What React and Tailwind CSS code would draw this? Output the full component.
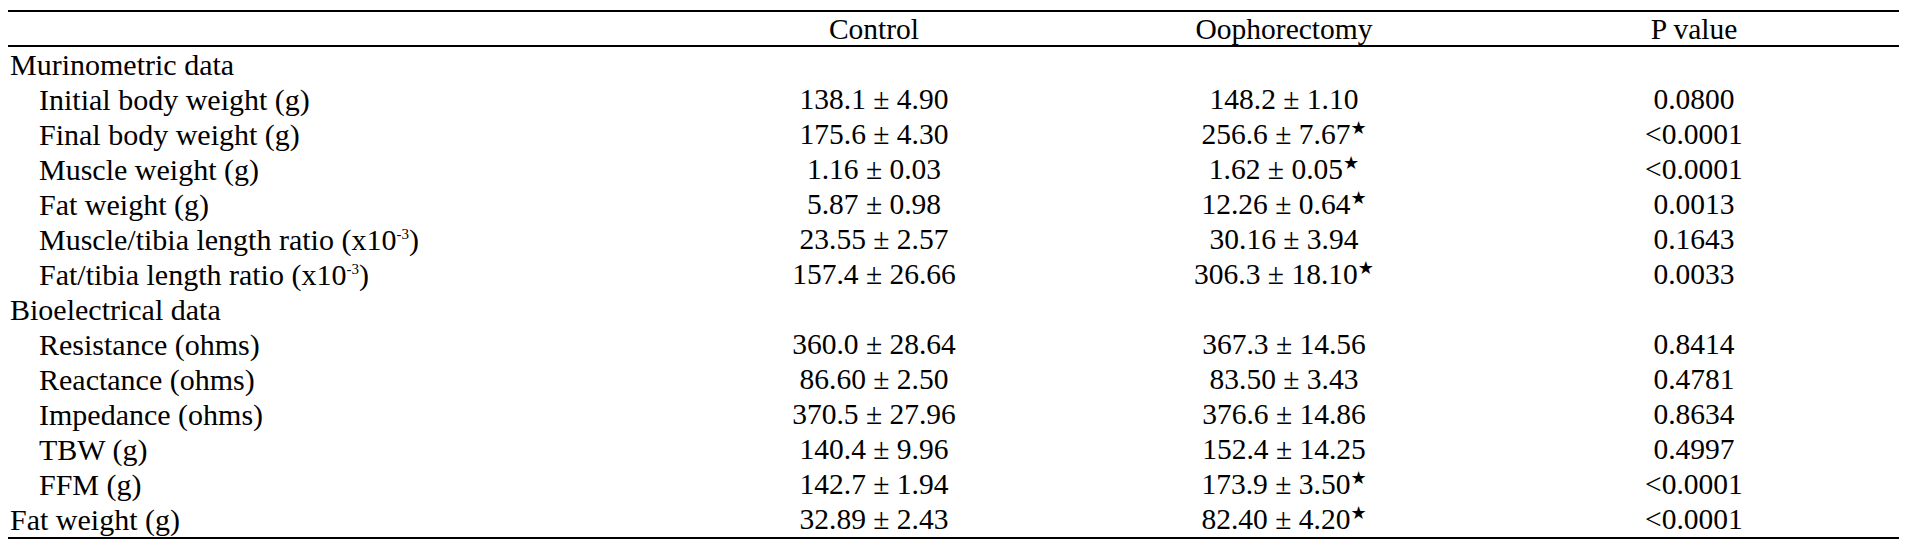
const rows = [
  { label: 'Murinometric data', group: true },
  { label: 'Initial body weight (g)', control: '138.1 ± 4.90', ovx: '148.2 ± 1.10', p: '0.0800' },
  { label: 'Final body weight (g)', control: '175.6 ± 4.30', ovx: '256.6 ± 7.67', star: true, p: '<0.0001' },
  { label: 'Muscle weight (g)', control: '1.16 ± 0.03', ovx: '1.62 ± 0.05', star: true, p: '<0.0001' },
  { label: 'Fat weight (g)', control: '5.87 ± 0.98', ovx: '12.26 ± 0.64', star: true, p: '0.0013' },
  { label: 'Muscle/tibia length ratio (x10', sup: '-3', control: '23.55 ± 2.57', ovx: '30.16 ± 3.94', p: '0.1643' },
  { label: 'Fat/tibia length ratio (x10', sup: '-3', control: '157.4 ± 26.66', ovx: '306.3 ± 18.10', star: true, p: '0.0033' },
  { label: 'Bioelectrical data', group: true },
  { label: 'Resistance (ohms)', control: '360.0 ± 28.64', ovx: '367.3 ± 14.56', p: '0.8414' },
  { label: 'Reactance (ohms)', control: '86.60 ± 2.50', ovx: '83.50 ± 3.43', p: '0.4781' },
  { label: 'Impedance (ohms)', control: '370.5 ± 27.96', ovx: '376.6 ± 14.86', p: '0.8634' },
  { label: 'TBW (g)', control: '140.4 ± 9.96', ovx: '152.4 ± 14.25', p: '0.4997' },
  { label: 'FFM (g)', control: '142.7 ± 1.94', ovx: '173.9 ± 3.50', star: true, p: '<0.0001' },
  { label: 'Fat weight (g)', top: true, control: '32.89 ± 2.43', ovx: '82.40 ± 4.20', star: true, p: '<0.0001' },
];

function Star() {
  return (
    <span className="relative top-[-10px] text-[18px] leading-none font-['DejaVu_Sans',sans-serif]">★</span>
  );
}

export default function App() {
  return (
    <div className="min-h-screen bg-white pt-[10px] pl-[8px] text-black font-['Liberation_Serif',serif] text-[29.5px] leading-[35px]">
      <div className="w-[1891px] border-t-2 border-b-2 border-black">
        {/* Header */}
        <div className="grid grid-cols-[661px_1fr_1fr_1fr] h-[35px] border-b-2 border-black">
          <div />
          <div className="text-center">Control</div>
          <div className="text-center">Oophorectomy</div>
          <div className="text-center">P value</div>
        </div>

        {/* Body */}
        {rows.map((r, i) => (
          <div key={i} className="grid grid-cols-[661px_1fr_1fr_1fr] h-[35px]">
            <div className={r.group || r.top ? 'pl-[2px] whitespace-nowrap text-[30px]' : 'pl-[31px] whitespace-nowrap text-[30px]'}>
              {r.label}
              {r.sup && (
                <>
                  <span className="relative top-[-11px] text-[15px] leading-none">{r.sup}</span>)
                </>
              )}
            </div>
            <div className="text-center whitespace-nowrap">{r.control}</div>
            <div className="text-center whitespace-nowrap">
              {r.ovx}
              {r.star && <Star />}
            </div>
            <div className="text-center whitespace-nowrap">{r.p}</div>
          </div>
        ))}
      </div>
    </div>
  );
}
